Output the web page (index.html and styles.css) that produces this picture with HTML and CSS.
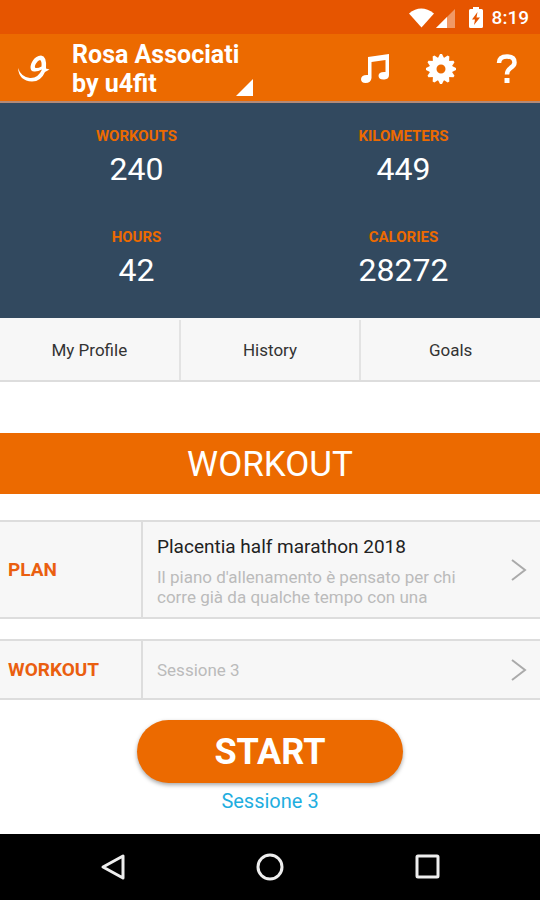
FILE: index.html
```html
<!DOCTYPE html>
<html lang="en">
<head>
    <meta charset="UTF-8">
    <meta name="viewport" content="width=device-width, initial-scale=1">
    <title>Rosa Associati by u4fit</title>
    <link rel="stylesheet" href="styles.css">
</head>
<body>

    <div class="l-wrapper">
        <div class="status">
            <svg class="status-signal" width="50" height="22" viewBox="0 0 50 22">
                <path d="M0 6.500Q12-3.500 25 6.500L12.500 20.500z"/>
                <path d="M46 2V21H27z" opacity=".4"/>
                <path d="M38 10V21H27z"/>
            </svg>
            <svg class="status-battery" width="14" height="22" viewBox="0 0 14 22">
                <path d="M4 0H10V2H12.500Q14 2 14 3.500V19.500Q14 21 12.500 21H1.500Q0 21 0 19.500V3.500Q0 2 1.500 2H4z"/>
                <path class="status-bolt" d="M8.500 5L3 12.500H6L5 18L11 10.500H7.500z"/>
            </svg>
            <span>8:19</span>
        </div>

        <header class="header">
            <svg class="logo" width="34" height="30" viewBox="0 0 34 30">
                <path d="M2 14Q3 27 16 27.500Q25 27.500 29 18L33.500 15.500L30 14.500Q31 2 25 1.500C18 2 15 9 14.500 13Q14.500 18 19 17.500Q22 17.500 26 15.500Q22 24.500 14 24Q5 23 2 14zM25.500 12.500Q22 14.500 19.500 14Q18 13 20 9.500Q22 6 24 6Q26 7 25.500 12.500z" fill-rule="evenodd"/>
            </svg>
            <button type="button" class="title">
                <span class="title-text">Rosa Associati<br>by u4fit</span>
                <svg width="17" height="17" viewBox="0 0 17 17"><path d="M17 0V17H0z"/></svg>
            </button>
            <div class="actions">
                <button type="button" aria-label="Music">
                    <svg width="30" height="30" viewBox="0 0 30 30">
                        <path d="M8 3L29 0V21Q29 25 24.500 25.500Q19 26 18.500 22Q18.500 17.500 25.500 18V6L11.500 8V24Q11 29 5.500 29Q1 29 1 25Q1.500 20.500 8 21z"/>
                    </svg>
                </button>
                <button type="button" aria-label="Settings">
                    <svg width="30" height="30" viewBox="-15 -15 30 30">
                        <circle r="8" fill="none" stroke="#FFF" stroke-width="7"/>
                        <g id="teeth">
                            <path id="tooth" d="M-3.500-10L-1-15H1L3.500-10z"/>
                            <use href="#tooth" transform="rotate(30)"/>
                            <use href="#tooth" transform="rotate(60)"/>
                        </g>
                        <use href="#teeth" transform="rotate(90)"/>
                        <use href="#teeth" transform="rotate(180)"/>
                        <use href="#teeth" transform="rotate(270)"/>
                    </svg>
                </button>
                <button type="button" aria-label="Help">
                    <svg width="30" height="30" viewBox="-4 0 30 30">
                        <path d="M3 9Q3 2.500 11 2.500Q18.500 2.500 18.500 8.500Q18.500 11.500 14.500 14Q11 16.500 11 20.500" fill="none" stroke="#FFF" stroke-width="4.500"/>
                        <path d="M8.500 24H13.500V29H8.500z"/>
                    </svg>
                </button>
            </div>
        </header>

        <dl class="stats">
            <div>
                <dt>WORKOUTS</dt>
                <dd>240</dd>
            </div>
            <div>
                <dt>KILOMETERS</dt>
                <dd>449</dd>
            </div>
            <div>
                <dt>HOURS</dt>
                <dd>42</dd>
            </div>
            <div>
                <dt>CALORIES</dt>
                <dd>28272</dd>
            </div>
        </dl>

        <nav class="tabs">
            <a href="#profile">My Profile</a>
            <a href="#history">History</a>
            <a href="#goals">Goals</a>
        </nav>

        <main class="main">
            <h1>WORKOUT</h1>

            <a href="#plan" class="row row--plan">
                <span class="row-label">PLAN</span>
                <span class="row-content">
                    <span class="row-title">Placentia half marathon 2018</span>
                    <span class="row-text">Il piano d'allenamento è pensato per chi corre già da qualche tempo con una</span>
                </span>
                <svg class="arrow" width="16" height="22" viewBox="0 0 16 22"><path d="M1 1L14 11L1 21"/></svg>
            </a>

            <a href="#workout" class="row">
                <span class="row-label">WORKOUT</span>
                <span class="row-content">
                    <span class="row-text">Sessione 3</span>
                </span>
                <svg class="arrow" width="16" height="22" viewBox="0 0 16 22"><path d="M1 1L14 11L1 21"/></svg>
            </a>

            <button type="button" class="start">START</button>
            <p class="session">Sessione 3</p>
        </main>

        <footer class="navbar">
            <button type="button" aria-label="Back">
                <svg width="28" height="28" viewBox="0 0 28 28"><path d="M25 3V25L5 14z"/></svg>
            </button>
            <button type="button" aria-label="Home">
                <svg width="28" height="28" viewBox="0 0 28 28"><circle cx="14" cy="14" r="12"/></svg>
            </button>
            <button type="button" aria-label="Recent apps">
                <svg width="28" height="28" viewBox="0 0 28 28"><rect x="3" y="3" width="21" height="21" rx="1"/></svg>
            </button>
        </footer>
    </div>

</body>
</html>
```
FILE: styles.css
```css
* {
    box-sizing: border-box;
    }
BODY {
    margin: 0;
    background: #FFF;
    font: 17px/20px Roboto, sans-serif;
    color: #333;
    }
A {
    color: inherit;
    text-decoration: none;
    }
BUTTON {
    padding: 0;
    border: 0;
    background: none;
    font: inherit;
    color: inherit;
    cursor: pointer;
    }
SVG {
    display: block;
    flex-shrink: 0;
    fill: #FFF;
    }
.l-wrapper {
    display: flex;
    flex-direction: column;
    min-height: 100vh;
    }
.status {
    display: flex;
    justify-content: flex-end;
    align-items: center;
    height: 34px;
    padding: 2px 11px 0;
    background: #E65500;
    font-size: 19px;
    font-weight: 500;
    color: #FFF;
    }
.status-battery {
    margin: 0 9px 0 10px;
    }
.status-bolt {
    fill: #E65500;
    }
.header {
    display: flex;
    align-items: center;
    height: 69px;
    padding: 2px 18px 0 16px;
    border-bottom: 2px solid #B38A78;
    background: #EC6A00;
    color: #FFF;
    }
.title {
    display: flex;
    align-items: flex-end;
    margin-left: 22px;
    text-align: left;
    font-size: 25px;
    font-weight: 700;
    line-height: 29px;
    }
    .title SVG {
        margin: 0 0 2px -3px;
        }
.actions {
    display: flex;
    align-items: center;
    gap: 36px;
    margin-left: auto;
    }
.stats {
    display: grid;
    grid-template-columns: 1fr 1fr;
    row-gap: 39px;
    margin: 0;
    padding: 23px 3px 29px;
    background: #32495F;
    text-align: center;
    }
    .stats DT {
        font-size: 15px;
        font-weight: 700;
        color: #EC6A00;
        }
    .stats DD {
        margin: 4px 0 0;
        font-size: 32px;
        line-height: 38px;
        color: #FFF;
        }
.tabs {
    display: flex;
    height: 64px;
    padding-top: 2px;
    border-bottom: 2px solid #DDD;
    background: #F7F7F7;
    }
    .tabs A {
        flex: 1;
        display: flex;
        justify-content: center;
        align-items: center;
        }
    .tabs A + A {
        border-left: 2px solid #E3E3E3;
        }
.main {
    flex: 1;
    padding: 51px 0 21px;
    }
    .main H1 {
        margin: 0 0 26px;
        padding-top: 3px;
        background: #EC6A00;
        text-align: center;
        font-size: 35px;
        font-weight: 400;
        line-height: 58px;
        color: #FFF;
        }
.row {
    display: flex;
    align-items: center;
    height: 61px;
    margin-bottom: 20px;
    padding-right: 13px;
    border: solid #DDD;
    border-width: 2px 0;
    background: #F7F7F7;
    }
.row--plan {
    height: 99px;
    }
.row-label {
    display: flex;
    align-items: center;
    align-self: stretch;
    width: 143px;
    padding-left: 8px;
    border-right: 2px solid #DDD;
    font-size: 19px;
    font-weight: 700;
    color: #EA5F10;
    }
.row-content {
    flex: 1;
    padding: 0 48px 0 14px;
    }
.row-title {
    display: block;
    margin-bottom: 8px;
    padding-top: 2px;
    font-size: 19px;
    line-height: 24px;
    color: #222;
    }
.row-text {
    display: block;
    color: #BBB;
    }
.arrow {
    fill: none;
    stroke: #AAA;
    stroke-width: 2;
    }
.start {
    display: block;
    width: calc(50% - 4px);
    height: 63px;
    margin: 0 auto;
    border-radius: 32px;
    background: #EC6A00;
    box-shadow: 0 2px 4px rgba(0, 0, 0, .35);
    font-size: 36px;
    font-weight: 700;
    color: #FFF;
    }
.session {
    margin: 8px 0 0;
    text-align: center;
    font-size: 20px;
    color: #1FAEDF;
    }
.navbar {
    display: flex;
    justify-content: space-between;
    align-items: center;
    height: 66px;
    padding: 0 98px;
    background: #000;
    }
    .navbar SVG {
        fill: none;
        stroke: #EEE;
        stroke-width: 3;
        stroke-linejoin: round;
        }
```
